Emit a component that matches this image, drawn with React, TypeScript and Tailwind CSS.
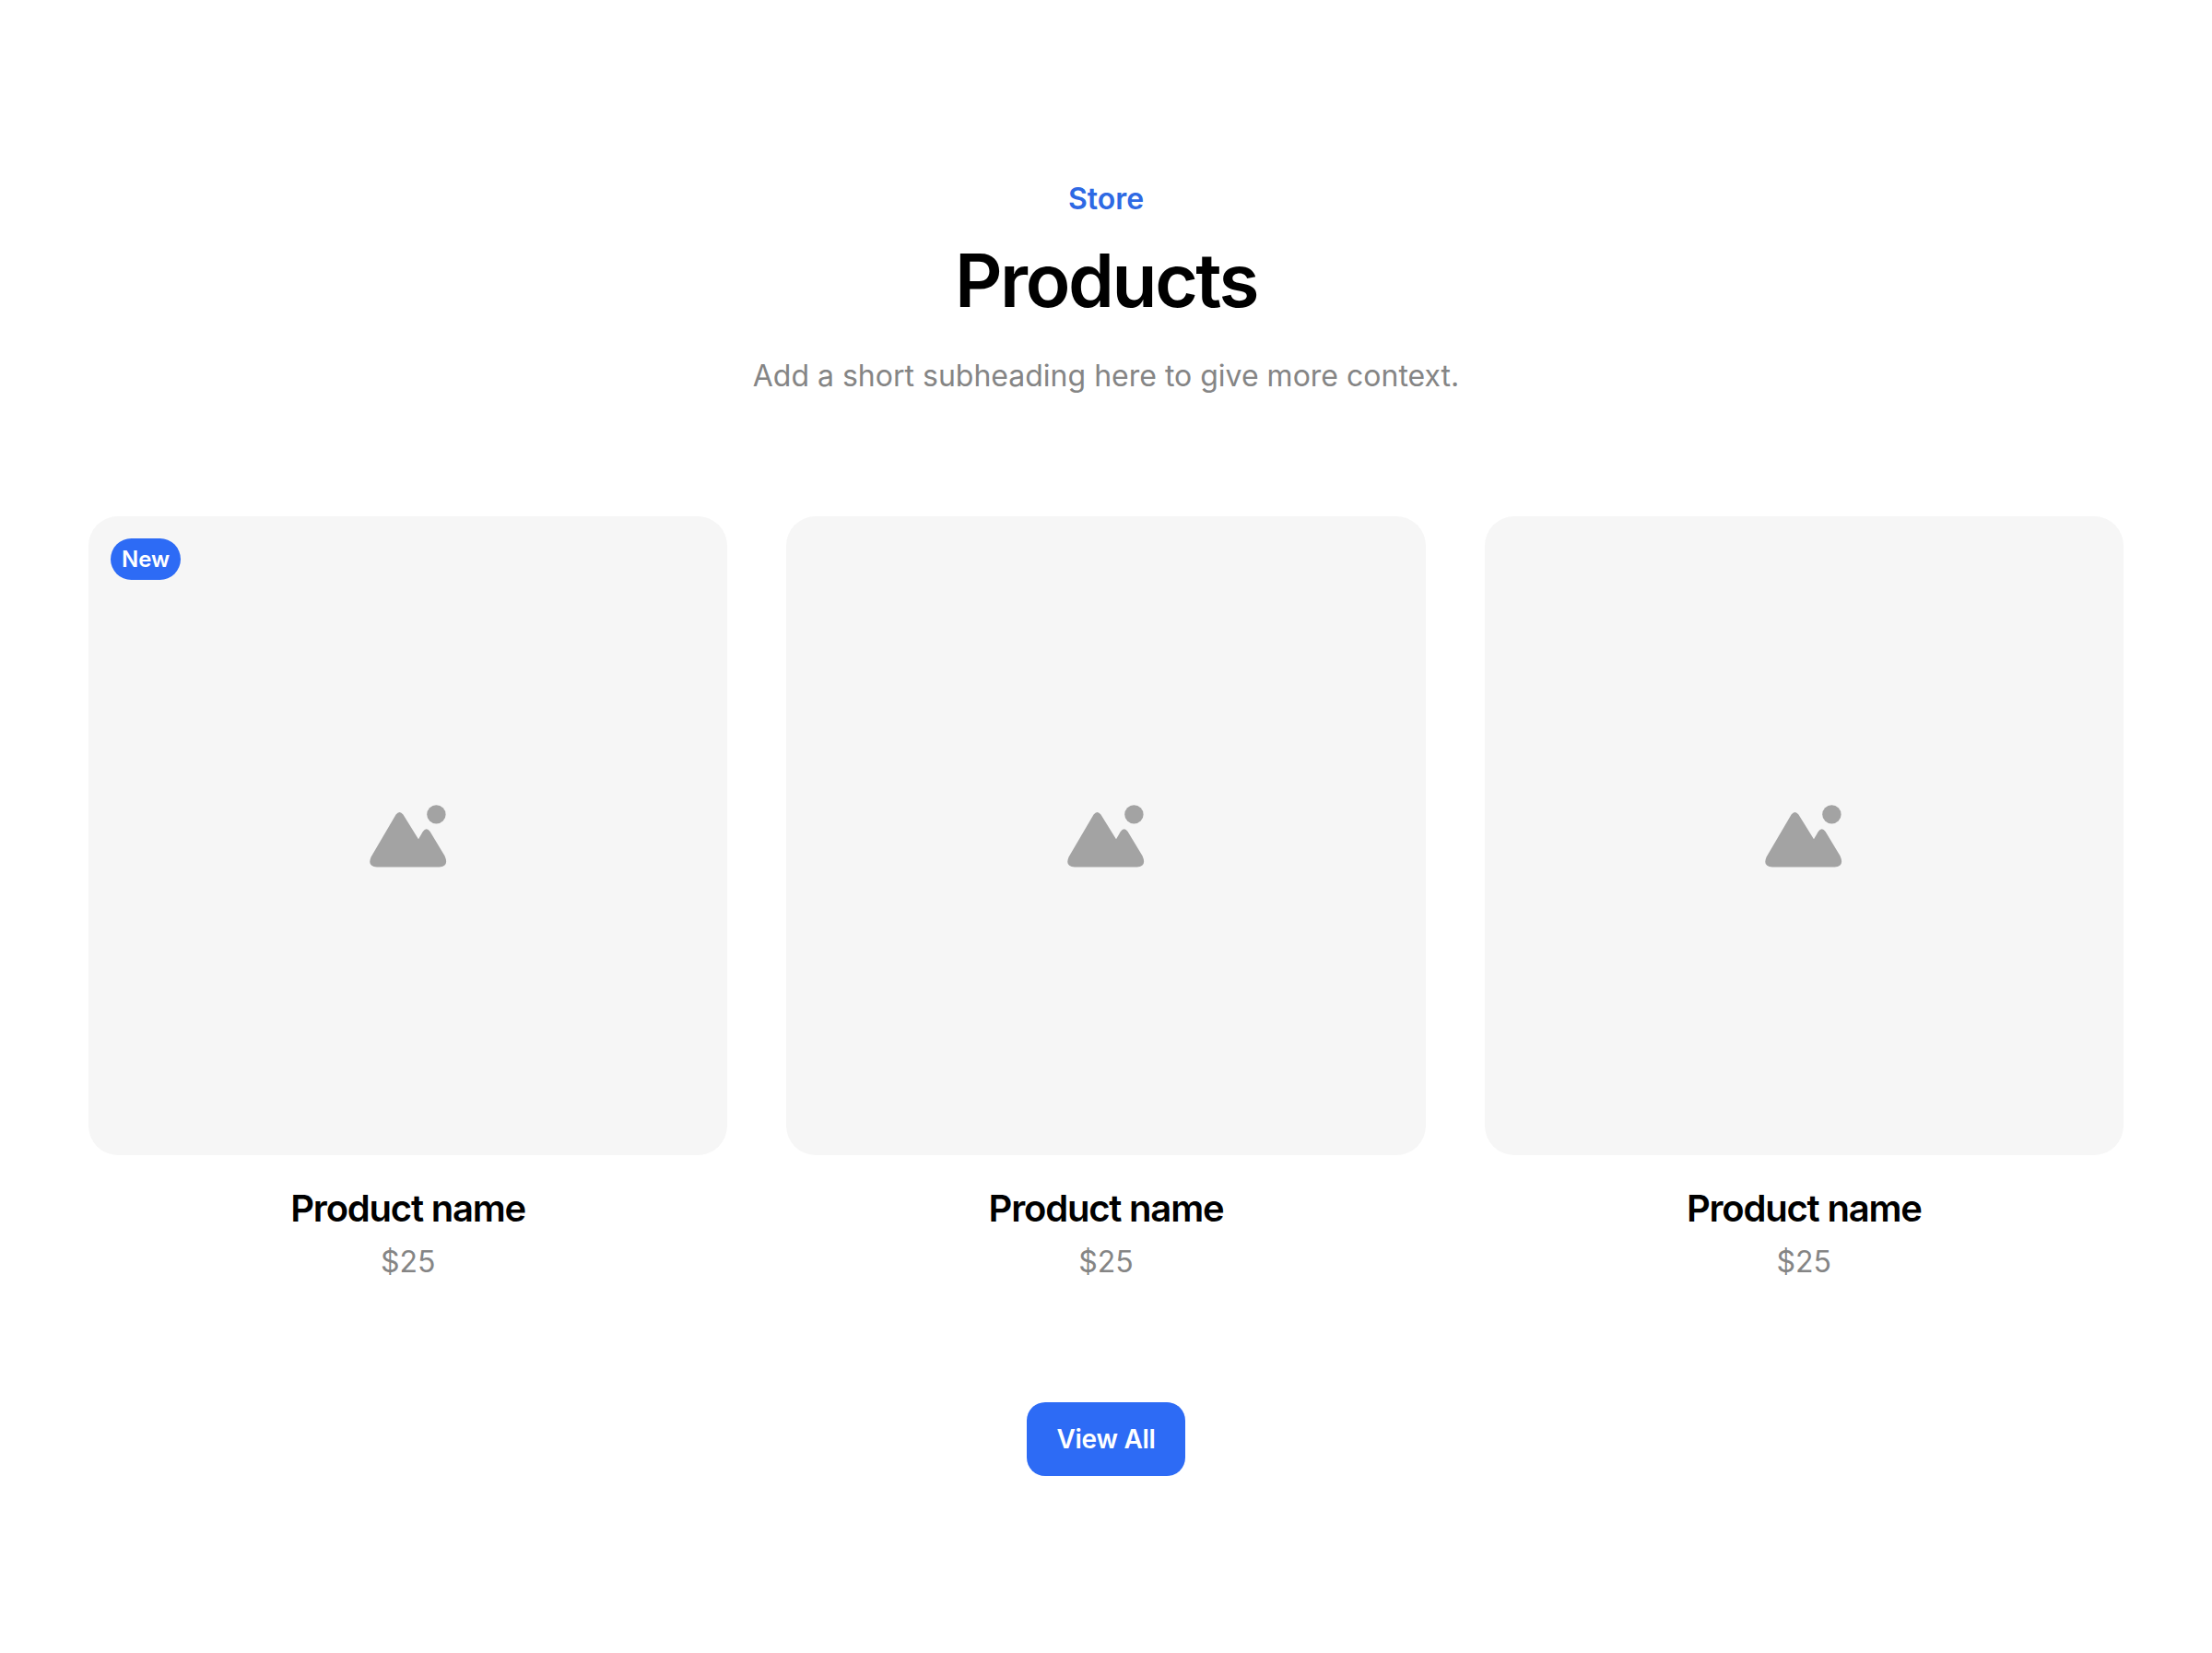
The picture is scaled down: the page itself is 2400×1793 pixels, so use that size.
const products = [{ id: 1, isNew: true }, { id: 2, isNew: false }, { id: 3, isNew: false }];

function PlaceholderIcon() {
  return (
    <svg width="84" height="68" viewBox="0 0 84 68" fill="#a3a3a3" aria-hidden="true">
      <circle cx="72.4" cy="10.4" r="10.2" />
      <path d="M28.6 10.6Q32.5 5.6 36.4 10.6L53 37.2 57.8 29Q61.7 23.6 65.6 29L81.6 55.4Q86.6 67 75.5 67.4L8 67.4Q-3 67 1.6 56.5Z" />
    </svg>
  );
}

function ProductCard({ isNew }: { isNew: boolean }) {
  return (
    <article className="text-center">
      <div className="relative flex aspect-square items-center justify-center rounded-[32px] bg-[#f6f6f6]">
        {isNew ? (
          <span className="absolute left-6 top-6 rounded-full bg-[#2d6bf5] px-3 py-[7px] text-[24px] leading-[31px] font-semibold text-white">
            New
          </span>
        ) : null}
        <PlaceholderIcon />
      </div>
      <h3 className="mt-[34px] text-[40px] leading-[48px] font-semibold tracking-[-0.03em] text-black">
        Product name
      </h3>
      <p className="mt-[10px] text-[32px] leading-[48px] text-[#858585]">$25</p>
    </article>
  );
}

export default function App() {
  return (
    <main className="min-h-[1793px] bg-white px-24 pt-[192px] font-['Inter',sans-serif]">
      <header className="text-center">
        <p className="text-[32px] leading-[48px] font-semibold text-[#2e69e4]">Store</p>
        <h1 className="mt-[20px] text-[80px] leading-[88px] font-semibold tracking-[-0.03em] text-black">Products</h1>
        <p className="mt-[36px] text-[32px] leading-[48px] text-[#858585]">
          Add a short subheading here to give more context.
        </p>
      </header>
      <section className="mt-[128px] grid grid-cols-3 gap-16">
        {products.map((product) => (
          <ProductCard key={product.id} isNew={product.isNew} />
        ))}
      </section>
      <div className="mt-[128px] flex justify-center">
        <button className="rounded-[20px] bg-[#2d6bf5] px-8 py-4 text-[28px] leading-[48px] font-semibold tracking-[-0.01em] text-white">
          View All
        </button>
      </div>
    </main>
  );
}
